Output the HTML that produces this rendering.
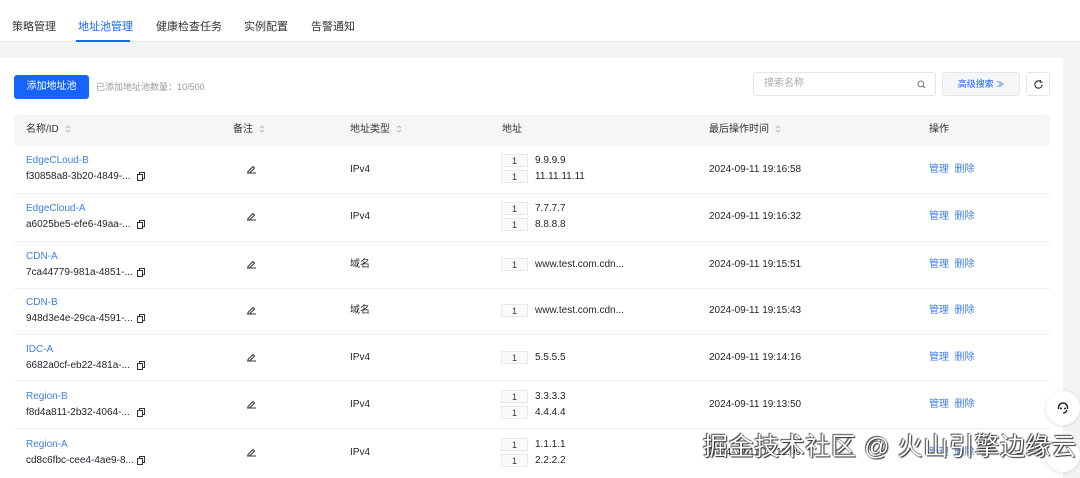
<!DOCTYPE html>
<html><head><meta charset="utf-8"><style>
*{box-sizing:border-box;margin:0;padding:0}
body{width:1080px;height:478px;overflow:hidden;background:#f2f3f5;font-family:"Liberation Sans","Noto Sans CJK SC",sans-serif;font-size:10px;color:#1d2129;position:relative}
.tabs{position:absolute;left:0;top:0;width:1080px;height:42px;background:#fff;border-bottom:1px solid #e5e6eb}
.tab{position:absolute;top:21px;font-size:11px;line-height:12px;color:#333}
.tab.on{color:#1664ff}
.ul{position:absolute;left:76px;top:40px;width:54px;height:2px;background:#1664ff}
.panel{position:absolute;left:0;top:58px;width:1063px;height:420px;background:#fff}
.btn{position:absolute;left:14px;top:75px;width:75px;height:24px;background:#1664ff;color:#fff;border-radius:3px;font-size:10px;text-align:center;line-height:24px}
.cnt{position:absolute;left:96px;top:81px;color:#999;font-size:9px;line-height:12px}
.search{position:absolute;left:753px;top:72px;width:183px;height:24px;border:1px solid #e5e6eb;border-radius:3px;color:#aaa;padding-left:10px;line-height:22px}
.adv{position:absolute;left:942px;top:72px;width:78px;height:24px;border:1px solid #e5e6eb;background:#f5f6f8;border-radius:3px;color:#1664ff;text-align:center;line-height:22px;font-size:9px}
.ref{position:absolute;left:1026px;top:72px;width:24px;height:24px;border:1px solid #e5e6eb;border-radius:3px}
.thead{position:absolute;left:14px;top:115px;width:1036px;height:31px;background:#f5f6f8;border-radius:4px}
.th{position:absolute;top:124px;line-height:12px;color:#333}
.row{position:absolute;left:14px;width:1036px;border-bottom:1px solid #edeef0}
.t{position:absolute;white-space:nowrap;line-height:12px}
.lnk{color:#3f7fe8}
.box{position:absolute;left:501px;width:27px;height:13px;border:1px solid #e8e9ec;background:#fafafa;font-size:9px;text-align:center;line-height:12px;color:#333}
.sort{display:inline-block;vertical-align:middle;margin-left:6px}
.wm{position:absolute;left:703px;top:432px;font-size:25px;line-height:30px;color:#fff;letter-spacing:0.6px;text-shadow:0 0 1px #000,1px 1px 1px #333,-1px -1px 1px #555;white-space:nowrap}
.float{position:absolute;left:1046px;width:34px;height:34px;border-radius:17px;background:#fff;box-shadow:0 1px 4px rgba(0,0,0,.12)}
</style></head><body>
<div class="tabs">
<span class="tab" style="left:12px">策略管理</span>
<span class="tab on" style="left:78px">地址池管理</span>
<span class="tab" style="left:156px">健康检查任务</span>
<span class="tab" style="left:244px">实例配置</span>
<span class="tab" style="left:311px">告警通知</span>
<div class="ul"></div>
</div>
<div class="panel"></div>
<div class="btn">添加地址池</div>
<div class="cnt">已添加地址池数量：10/500</div>
<div class="search">搜索名称<svg style="position:absolute;right:9px;top:7px" width="9" height="9" viewBox="0 0 10 10"><circle cx="4.3" cy="4.3" r="3.3" fill="none" stroke="#666" stroke-width="1"/><path d="M6.8 6.8L9 9" stroke="#666"/></svg></div>
<div class="adv">高级搜索 <span style="font-size:8px">≫</span></div>
<div class="ref"><svg style="position:absolute;left:6px;top:6px" width="11" height="11" viewBox="0 0 12 12"><path d="M10 6A4 4 0 1 1 8.5 2.9" fill="none" stroke="#333" stroke-width="1.2"/><path d="M8 1v2.5h2.5" fill="none" stroke="#333" stroke-width="1.2"/></svg></div>
<div class="thead"></div>
<span class="th" style="left:26px">名称/ID<svg class="sort" width="6" height="10" viewBox="0 0 6 10"><path d="M1 4L3 2L5 4M1 6L3 8L5 6" fill="none" stroke="#bbb"/></svg></span>
<span class="th" style="left:233px">备注<svg class="sort" width="6" height="10" viewBox="0 0 6 10"><path d="M1 4L3 2L5 4M1 6L3 8L5 6" fill="none" stroke="#bbb"/></svg></span>
<span class="th" style="left:350px">地址类型<svg class="sort" width="6" height="10" viewBox="0 0 6 10"><path d="M1 4L3 2L5 4M1 6L3 8L5 6" fill="none" stroke="#bbb"/></svg></span>
<span class="th" style="left:502px">地址</span>
<span class="th" style="left:709px">最后操作时间<svg class="sort" width="6" height="10" viewBox="0 0 6 10"><path d="M1 4L3 2L5 4M1 6L3 8L5 6" fill="none" stroke="#bbb"/></svg></span>
<span class="th" style="left:929px">操作</span>

<div class="row" style="top:146px;height:48px"></div>
<div class="row" style="top:194px;height:48px"></div>
<div class="row" style="top:242px;height:47px"></div>
<div class="row" style="top:289px;height:46px"></div>
<div class="row" style="top:335px;height:46px"></div>
<div class="row" style="top:381px;height:48px"></div>

<div class="t lnk" style="left:26px;top:155px">EdgeCLoud-B</div><div class="t" style="left:26px;top:171px">f30858a8-3b20-4849-...</div>
<div class="t lnk" style="left:26px;top:203px">EdgeCloud-A</div><div class="t" style="left:26px;top:219px">a6025be5-efe6-49aa-...</div>
<div class="t lnk" style="left:26px;top:251px">CDN-A</div><div class="t" style="left:26px;top:267px">7ca44779-981a-4851-...</div>
<div class="t lnk" style="left:26px;top:297px">CDN-B</div><div class="t" style="left:26px;top:313px">948d3e4e-29ca-4591-...</div>
<div class="t lnk" style="left:26px;top:344px">IDC-A</div><div class="t" style="left:26px;top:360px">6682a0cf-eb22-481a-...</div>
<div class="t lnk" style="left:26px;top:391px">Region-B</div><div class="t" style="left:26px;top:407px">f8d4a811-2b32-4064-...</div>
<div class="t lnk" style="left:26px;top:439px">Region-A</div><div class="t" style="left:26px;top:455px">cd8c6fbc-cee4-4ae9-8...</div>

<svg style="position:absolute;left:0;top:0" width="1080" height="478">
<g fill="none" stroke="#333" stroke-width="1">
<g id="cp"><rect x="137.5" y="174.5" width="5" height="6"/><path d="M139.5 174.5v-2h5v6h-2"/></g>
<use href="#cp" y="48"/><use href="#cp" y="96"/><use href="#cp" y="142"/><use href="#cp" y="189"/><use href="#cp" y="236"/><use href="#cp" y="284"/>
<g id="ed"><path d="M247 173h9M248 171.5l5-5 1.5 1.5-5 5h-1.5z"/></g>
<use href="#ed" y="47"/><use href="#ed" y="95"/><use href="#ed" y="141"/><use href="#ed" y="188"/><use href="#ed" y="235"/><use href="#ed" y="283"/>
</g>
</svg>

<div class="t" style="left:350px;top:164px">IPv4</div>
<div class="t" style="left:350px;top:211px">IPv4</div>
<div class="t" style="left:350px;top:259px">域名</div>
<div class="t" style="left:350px;top:305px">域名</div>
<div class="t" style="left:350px;top:352px">IPv4</div>
<div class="t" style="left:350px;top:399px">IPv4</div>
<div class="t" style="left:350px;top:447px">IPv4</div>

<div class="box" style="top:154px">1</div><div class="t" style="left:535px;top:155px">9.9.9.9</div>
<div class="box" style="top:170px">1</div><div class="t" style="left:535px;top:171px">11.11.11.11</div>
<div class="box" style="top:202px">1</div><div class="t" style="left:535px;top:203px">7.7.7.7</div>
<div class="box" style="top:218px">1</div><div class="t" style="left:535px;top:219px">8.8.8.8</div>
<div class="box" style="top:258px">1</div><div class="t" style="left:535px;top:259px">www.test.com.cdn...</div>
<div class="box" style="top:304px">1</div><div class="t" style="left:535px;top:305px">www.test.com.cdn...</div>
<div class="box" style="top:351px">1</div><div class="t" style="left:535px;top:352px">5.5.5.5</div>
<div class="box" style="top:390px">1</div><div class="t" style="left:535px;top:391px">3.3.3.3</div>
<div class="box" style="top:406px">1</div><div class="t" style="left:535px;top:407px">4.4.4.4</div>
<div class="box" style="top:438px">1</div><div class="t" style="left:535px;top:439px">1.1.1.1</div>
<div class="box" style="top:454px">1</div><div class="t" style="left:535px;top:455px">2.2.2.2</div>

<div class="t" style="left:709px;top:164px">2024-09-11 19:16:58</div>
<div class="t" style="left:709px;top:211px">2024-09-11 19:16:32</div>
<div class="t" style="left:709px;top:259px">2024-09-11 19:15:51</div>
<div class="t" style="left:709px;top:305px">2024-09-11 19:15:43</div>
<div class="t" style="left:709px;top:352px">2024-09-11 19:14:16</div>
<div class="t" style="left:709px;top:399px">2024-09-11 19:13:50</div>
<div class="t" style="left:709px;top:447px">2024-09-11 19:12:09</div>

<div class="t lnk" style="left:929px;top:164px">管理&nbsp;&nbsp;删除</div>
<div class="t lnk" style="left:929px;top:211px">管理&nbsp;&nbsp;删除</div>
<div class="t lnk" style="left:929px;top:259px">管理&nbsp;&nbsp;删除</div>
<div class="t lnk" style="left:929px;top:305px">管理&nbsp;&nbsp;删除</div>
<div class="t lnk" style="left:929px;top:352px">管理&nbsp;&nbsp;删除</div>
<div class="t lnk" style="left:929px;top:399px">管理&nbsp;&nbsp;删除</div>
<div class="t lnk" style="left:929px;top:447px">管理&nbsp;&nbsp;删除</div>

<div class="float" style="top:391px"><svg style="position:absolute;left:10px;top:10px" width="14" height="14" viewBox="0 0 14 14"><path d="M2.5 8V6.5a4.5 4.5 0 0 1 9 0V8" fill="none" stroke="#222" stroke-width="1.5"/><circle cx="5" cy="7.5" r="1" fill="#222"/><circle cx="9" cy="7.5" r="1" fill="#222"/><path d="M11 9q-1 3-4 3" fill="none" stroke="#222" stroke-width="1.3"/></svg></div>
<div class="float" style="top:438px"></div>
<div class="wm">掘金技术社区 @ 火山引擎边缘云</div>
</body></html>
